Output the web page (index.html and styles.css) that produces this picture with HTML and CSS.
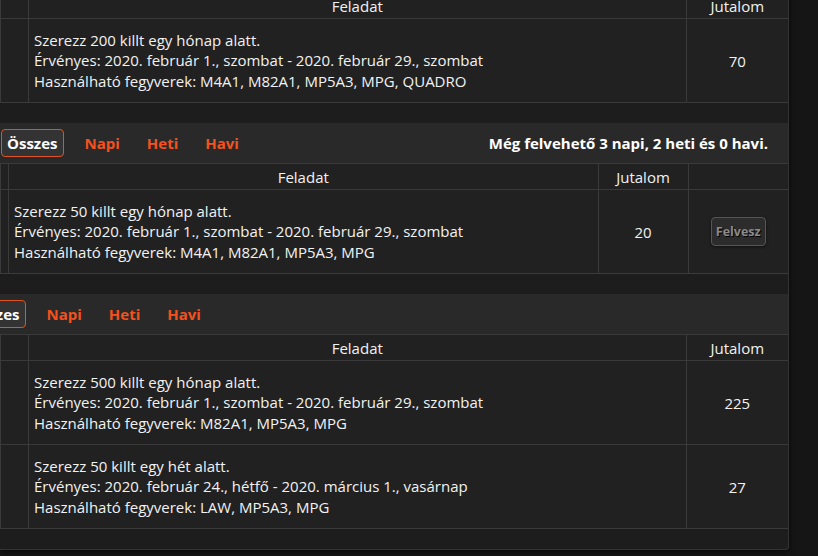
FILE: index.html
```html
<!DOCTYPE html>
<html lang="hu">
<head>
  <meta charset="UTF-8">
  <title>Küldetések</title>
  <meta name="viewport" content="width=device-width, initial-scale=1.0">
  <link rel="stylesheet" href="styles.css">
</head>
<body>
  <div class="panel">

    <!-- Aktív küldetés -->
    <section class="quest-block">
      <table class="quest-table wide-left">
        <thead>
          <tr>
            <th class="col-left"></th>
            <th>Feladat</th>
            <th class="col-reward">Jutalom</th>
          </tr>
        </thead>
        <tbody>
          <tr>
            <td class="col-left"></td>
            <td class="task">
              Szerezz 200 killt egy hónap alatt.<br>
              Érvényes: 2020. február 1., szombat - 2020. február 29., szombat<br>
              Használható fegyverek: M4A1, M82A1, MP5A3, MPG, QUADRO
            </td>
            <td class="reward">70</td>
          </tr>
        </tbody>
      </table>
    </section>

    <!-- Felvehető küldetések -->
    <section class="quest-block">
      <div class="tab-bar">
        <div class="tabs">
          <a href="#" class="tab active">Összes</a>
          <a href="#" class="tab">Napi</a>
          <a href="#" class="tab">Heti</a>
          <a href="#" class="tab">Havi</a>
        </div>
        <div class="remaining">Még felvehető 3 napi, 2 heti és 0 havi.</div>
      </div>
      <table class="quest-table narrow-left">
        <thead>
          <tr>
            <th class="col-left"></th>
            <th>Feladat</th>
            <th class="col-reward-sm">Jutalom</th>
            <th class="col-action"></th>
          </tr>
        </thead>
        <tbody>
          <tr>
            <td class="col-left"></td>
            <td class="task">
              Szerezz 50 killt egy hónap alatt.<br>
              Érvényes: 2020. február 1., szombat - 2020. február 29., szombat<br>
              Használható fegyverek: M4A1, M82A1, MP5A3, MPG
            </td>
            <td class="reward">20</td>
            <td class="reward"><button class="take-btn" disabled>Felvesz</button></td>
          </tr>
        </tbody>
      </table>
    </section>

    <!-- Teljesített küldetések -->
    <section class="quest-block">
      <div class="tab-bar">
        <div class="tabs shifted">
          <a href="#" class="tab active">Összes</a>
          <a href="#" class="tab">Napi</a>
          <a href="#" class="tab">Heti</a>
          <a href="#" class="tab">Havi</a>
        </div>
      </div>
      <table class="quest-table wide-left">
        <thead>
          <tr>
            <th class="col-left"></th>
            <th>Feladat</th>
            <th class="col-reward">Jutalom</th>
          </tr>
        </thead>
        <tbody>
          <tr>
            <td class="col-left"></td>
            <td class="task">
              Szerezz 500 killt egy hónap alatt.<br>
              Érvényes: 2020. február 1., szombat - 2020. február 29., szombat<br>
              Használható fegyverek: M82A1, MP5A3, MPG
            </td>
            <td class="reward">225</td>
          </tr>
          <tr>
            <td class="col-left"></td>
            <td class="task">
              Szerezz 50 killt egy hét alatt.<br>
              Érvényes: 2020. február 24., hétfő - 2020. március 1., vasárnap<br>
              Használható fegyverek: LAW, MP5A3, MPG
            </td>
            <td class="reward">27</td>
          </tr>
        </tbody>
      </table>
    </section>

  </div>
</body>
</html>
```

FILE: styles.css
```css
/* ===== Base ===== */
* {
  margin: 0;
  padding: 0;
  box-sizing: border-box;
}
html, body {
  height: 100%;
  font-family: "Open Sans", Arial, sans-serif;
  font-size: 15px;
}
body {
  background: #151515;
  color: #f2f2f2;
  overflow: hidden;
}

/* ===== Panel ===== */
.panel {
  width: 789px;
  margin-top: -8px; /* page is scrolled a little */
  background: #1d1d1d;
  border-right: 1px solid #333;
  border-bottom: 1px solid #333;
  border-bottom-right-radius: 4px;
  box-shadow: 0 2px 6px rgba(0,0,0,0.6);
  overflow: hidden;
}
.quest-block {
  margin-bottom: 20px;
}

/* ===== Tabs ===== */
.tab-bar {
  height: 40px;
  background: #292929;
  display: flex;
  align-items: center;
  justify-content: space-between;
  padding: 0 20px 0 1px;
}
.tabs {
  display: flex;
  align-items: center;
  gap: 15px;
}
.tabs.shifted {
  margin-left: -38px;
}
.tab {
  display: inline-block;
  height: 28px;
  line-height: 26px;
  padding: 0 5px;
  border: 1px solid transparent;
  border-radius: 4px;
  color: #f4511e;
  font-weight: bold;
  font-size: 15px;
  text-decoration: none;
}
.tab.active {
  color: #fff;
  background: #333;
  border-color: #e0521f;
}
.remaining {
  font-weight: bold;
  font-size: 15px;
  color: #fff;
}

/* ===== Tables ===== */
.quest-table {
  width: 100%;
  border-collapse: collapse;
  background: #212121;
}
.quest-table th,
.quest-table td {
  border: 1px solid #3a3a3a;
}
.quest-table tr > :last-child {
  border-right: none;
}
.quest-table th {
  height: 26px;
  font-weight: normal;
  text-align: center;
}
.wide-left .col-left { width: 28px; }
.narrow-left .col-left { width: 8px; }
.col-reward { width: 102px; }
.col-reward-sm { width: 90px; }
.col-action { width: 100px; }

.task {
  height: 84px;
  padding: 0 5px;
  line-height: 20.5px;
}
.reward {
  text-align: center;
}

/* ===== Take Button ===== */
.take-btn {
  width: 55px;
  height: 29px;
  background: #2c2c2c;
  color: #8a8a8a;
  border: 1px solid #555;
  border-radius: 4px;
  font-family: inherit;
  font-weight: bold;
  font-size: 12.5px;
  text-shadow: 1px 1px 1px #000;
  box-shadow: 0 1px 3px rgba(0,0,0,0.5);
}
```
